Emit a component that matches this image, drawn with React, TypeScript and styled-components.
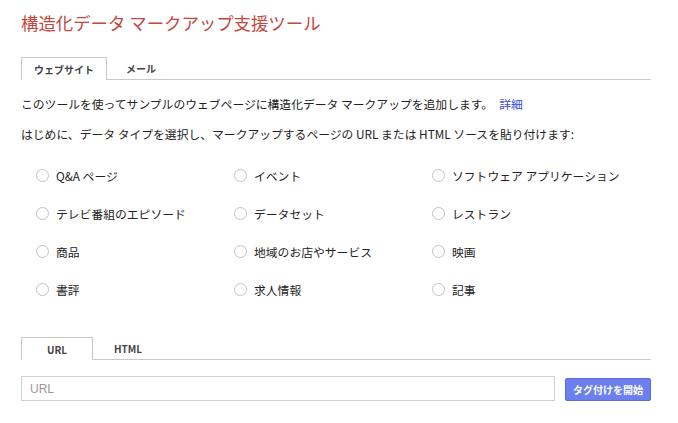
import React, { useState } from 'react';
import styled, { createGlobalStyle } from 'styled-components';

const GlobalStyle = createGlobalStyle`
  html, body {
    margin: 0;
    padding: 0;
    background: #ffffff;
  }
  body {
    font-family: "Noto Sans CJK JP", "Noto Sans", "Liberation Sans", sans-serif;
    color: #222222;
  }
`

const Page = styled('div')`
    width: 630px;
    padding: 12px 0 0 21px;
`

const Title = styled('h1')`
    margin: 0;
    padding: 0;
    font-size: 17.4px;
    font-weight: 400;
    line-height: 22px;
    color: #c4473e;
`

const TabBar = styled('div')<{ $top: number }>`
    display: flex;
    margin-top: ${p => p.$top}px;
    border-bottom: 1px solid #c8c8c8;
    height: 22px;
`

const Tab = styled('div')<{ $active?: boolean; $width: number }>`
    width: ${p => p.$width}px;
    box-sizing: border-box;
    display: flex;
    align-items: center;
    justify-content: center;
    font-size: 10px;
    font-weight: 700;
    color: #444444;
    border: 1px solid ${p => (p.$active ? '#c8c8c8' : 'transparent')};
    border-bottom: none;
    background: #ffffff;
    margin-bottom: ${p => (p.$active ? '-1px' : '0')};
    height: ${p => (p.$active ? '23px' : '22px')};
    cursor: pointer;
`

const Text = styled('p')<{ $top: number }>`
    margin: ${p => p.$top}px 0 0;
    font-size: 11.8px;
    line-height: 18px;
    color: #222222;
`

const Link = styled('a')`
    color: #3b4bd0;
    text-decoration: none;
    margin-left: 6px;
`

const TypeGrid = styled('div')`
    display: grid;
    grid-template-columns: repeat(3, 198px);
    grid-auto-rows: 38px;
    margin-top: 22px;
    padding-left: 15px;
`

const Option = styled('label')`
    display: flex;
    align-items: center;
    gap: 7px;
    height: 20px;
    font-size: 11.8px;
    color: #222222;
    cursor: pointer;
`

const Circle = styled('span')<{ $checked: boolean }>`
    width: 13px;
    height: 13px;
    box-sizing: border-box;
    border-radius: 50%;
    border: 1px solid #c2c2c2;
    background: ${p => (p.$checked ? 'radial-gradient(circle, #555 0 3px, #fff 3.5px)' : '#fff')};
    flex-shrink: 0;
`

const InputRow = styled('div')`
    display: flex;
    align-items: center;
    gap: 10px;
    margin-top: 16px;
`

const UrlInput = styled('input')`
    width: 534px;
    height: 25px;
    box-sizing: border-box;
    border: 1px solid #d0d0d0;
    padding: 0 8px;
    font-family: "Liberation Sans", Arial, sans-serif;
    font-size: 12px;
    color: #222;
    outline: none;
    &::placeholder {
      color: #999999;
    }
`

const StartButton = styled('button')`
    width: 86px;
    height: 23px;
    box-sizing: border-box;
    margin-top: 2px;
    border: 1px solid #5a6ee0;
    border-radius: 2px;
    background: #6b80ec;
    color: #ffffff;
    font-family: inherit;
    font-size: 10px;
    font-weight: 700;
    padding: 0;
    cursor: pointer;
`

const types = [
  'Q&A ページ', 'イベント', 'ソフトウェア アプリケーション',
  'テレビ番組のエピソード', 'データセット', 'レストラン',
  '商品', '地域のお店やサービス', '映画',
  '書評', '求人情報', '記事',
]

function App() {
    const [mode, setMode] = useState('web');
    const [source, setSource] = useState('url');
    const [picked, setPicked] = useState<string | null>(null);

  return (
      <Page>
        <GlobalStyle />
        <Title>構造化データ マークアップ支援ツール</Title>
        <TabBar $top={23}>
            <Tab $width={86} $active={mode === 'web'} onClick={() => setMode('web')}>ウェブサイト</Tab>
            <Tab $width={68} $active={mode === 'mail'} onClick={() => setMode('mail')}>メール</Tab>
        </TabBar>
        <Text $top={15}>
            このツールを使ってサンプルのウェブページに構造化データ マークアップを追加します。
            <Link href="#">詳細</Link>
        </Text>
        <Text $top={12}>
            はじめに、データ タイプを選択し、マークアップするページの URL または HTML ソースを貼り付けます:
        </Text>
        <TypeGrid>
            {types.map(t => (
                <Option key={t} onClick={() => setPicked(t)}>
                    <Circle $checked={picked === t} />
                    {t}
                </Option>
            ))}
        </TypeGrid>
        <TabBar $top={20}>
            <Tab $width={72} $active={source === 'url'} onClick={() => setSource('url')}>URL</Tab>
            <Tab $width={70} $active={source === 'html'} onClick={() => setSource('html')}>HTML</Tab>
        </TabBar>
        <InputRow>
            <UrlInput placeholder="URL" />
            <StartButton>タグ付けを開始</StartButton>
        </InputRow>
      </Page>
  );
}
export default App;
